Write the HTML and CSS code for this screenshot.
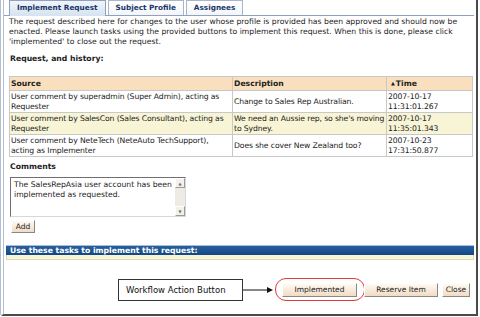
FILE: index.html
```html
<!DOCTYPE html>
<html lang="en">
<head>
    <meta charset="UTF-8">
    <title>Implement Request</title>
    <link rel="stylesheet" href="styles.css">
</head>
<body>
    <div class="frame">
        <div class="tabs">
            <span class="tab active">Implement Request</span>
            <span class="tab">Subject Profile</span>
            <span class="tab">Assignees</span>
        </div>

        <div class="panel">
            <p class="intro">The request described here for changes to the user whose profile is provided has been approved and should now be<br>enacted. Please launch tasks using the provided buttons to implement this request. When this is done, please click<br>'implemented' to close out the request.</p>

            <h4 class="label">Request, and history:</h4>

            <table class="history">
                <thead>
                    <tr>
                        <th class="col-source">Source</th>
                        <th class="col-desc">Description</th>
                        <th class="col-time"><span class="sort">&#9650;</span>Time</th>
                    </tr>
                </thead>
                <tbody>
                    <tr>
                        <td>User comment by superadmin (Super Admin), acting as<br>Requester</td>
                        <td>Change to Sales Rep Australian.</td>
                        <td>2007-10-17<br>11:31:01.267</td>
                    </tr>
                    <tr class="alt">
                        <td>User comment by SalesCon (Sales Consultant), acting as<br>Requester</td>
                        <td>We need an Aussie rep, so she's moving<br>to Sydney.</td>
                        <td>2007-10-17<br>11:35:01.343</td>
                    </tr>
                    <tr>
                        <td>User comment by NeteTech (NeteAuto TechSupport),<br>acting as Implementer</td>
                        <td>Does she cover New Zealand too?</td>
                        <td>2007-10-23<br>17:31:50.877</td>
                    </tr>
                </tbody>
            </table>

            <h4 class="label comments-label">Comments</h4>

            <div class="comment-box">
                <div class="comment-text">The SalesRepAsia user account has been<br>implemented as requested.</div>
                <div class="scrollbar">
                    <span class="scroll-btn">&#9650;</span>
                    <span class="scroll-track"></span>
                    <span class="scroll-btn">&#9660;</span>
                </div>
            </div>

            <button class="btn btn-add">Add</button>
        </div>

        <div class="tasks-bar">Use these tasks to implement this request:</div>
        <div class="tasks-sub"></div>

        <div class="actions">
            <div class="callout">Workflow Action Button</div>
            <svg class="callout-arrow" width="30" height="8" viewBox="0 0 30 8">
                <line x1="0" y1="4" x2="26" y2="4" stroke="#111" stroke-width="1"/>
                <polygon points="24,1 30,4 24,7" fill="#111"/>
            </svg>
            <span class="highlight">
                <button class="btn btn-implemented">Implemented</button>
            </span>
            <button class="btn btn-reserve">Reserve Item</button>
            <button class="btn btn-close">Close</button>
        </div>
    </div>
</body>
</html>
```

FILE: styles.css
```css
/* Workflow request panel */
*, *::before, *::after {
    box-sizing: border-box;
}

body {
    margin: 0;
    background: #fff;
    font-family: "DejaVu Sans", Verdana, sans-serif;
    font-size: 7.7px;
    color: #222;
}

.frame {
    width: 478px;
    height: 316px;
    border-left: 4px double #b4c0d2;
    border-right: 2px solid #4a4a4a;
    border-bottom: 2px solid #4a4a4a;
    border-bottom-left-radius: 3px;
    display: flex;
    flex-direction: column;
}

/* tabs */
.tabs {
    display: flex;
    align-items: flex-end;
    gap: 2px;
    height: 16px;
    padding-left: 5px;
    margin-right: 2px;
    border-bottom: 1px solid #8ea2c0;
}

.tab {
    height: 15px;
    line-height: 13px;
    padding: 0 7px;
    border: 1px solid #a9b6c8;
    border-bottom: none;
    background: linear-gradient(#fff, #f3f5f8);
    color: #1a356a;
    font-weight: bold;
    font-size: 7.3px;
}

.tab.active {
    height: 16px;
    margin-bottom: -1px;
    background: linear-gradient(#f1f5fa, #d6e2f0);
    border-color: #8ea2c0;
}

/* panel content */
.panel {
    padding: 0 4px 0 5px;
}

.intro {
    margin: 1px 0 0;
    line-height: 10px;
}

.label {
    margin: 7px 0 0 1px;
    font-size: 7.7px;
    line-height: 10px;
    font-weight: bold;
}

.history {
    margin-top: 12px;
    width: 463px;
    table-layout: fixed;
    border-collapse: collapse;
    border: 1px solid #c4c4c4;
    line-height: 10px;
}

.history th {
    height: 14px;
    padding: 0 1px;
    background: #f9dfbe;
    border: 1px solid #c8c8c8;
    text-align: left;
    font-weight: bold;
}

.history td {
    height: 22px;
    padding: 0 1px;
    border: 1px solid #c8c8c8;
    vertical-align: middle;
    white-space: nowrap;
    letter-spacing: -0.12px;
}

.history tr.alt td {
    background: #f8f4d6;
}

.col-source { width: 223px; }
.col-desc { width: 154px; }
.col-time { width: 86px; }

.sort {
    font-size: 5px;
    padding: 0 1px 0 3px;
    vertical-align: 1px;
}

.comments-label {
    margin-top: 5px;
}

.comment-box {
    display: flex;
    width: 176px;
    height: 40px;
    margin: 5px 0 0 1px;
    border: 1px solid;
    border-color: #6f6f6f #d8d8d8 #d8d8d8 #6f6f6f;
    background: #fff;
}

.comment-text {
    flex: 1;
    padding: 2px 3px;
    line-height: 10px;
}

.scrollbar {
    display: flex;
    flex-direction: column;
    width: 10px;
    background: #eeebe4;
}

.scroll-btn {
    height: 10px;
    font-size: 4px;
    line-height: 9px;
    text-align: center;
    color: #666;
    background: #f3f1ec;
    border: 1px solid;
    border-color: #fff #9a9a9a #9a9a9a #fff;
}

.scroll-track {
    flex: 1;
}

/* buttons */
.btn {
    height: 14px;
    padding: 0;
    font-family: inherit;
    font-size: 7.5px;
    color: #222;
    background: linear-gradient(#fffaf3, #f1dcc3);
    border: 1px solid;
    border-color: #fff #888 #888 #fff;
    cursor: pointer;
}

.btn-add {
    display: block;
    width: 24px;
    height: 13px;
    margin: 3px 0 0 2px;
}

.btn-implemented { width: 75px; }
.btn-reserve { width: 74px; margin-left: -1px; }
.btn-close { width: 28px; margin-left: 4px; }

/* tasks */
.tasks-bar {
    margin: 12px 2px 0;
    height: 10px;
    line-height: 9px;
    padding-left: 4px;
    background: linear-gradient(#28609f, #134784);
    border-top: 1px solid #a6bedb;
    color: #fff;
    font-weight: bold;
}

.tasks-sub {
    margin: 0 2px;
    height: 5px;
    background: #f8f4d6;
    border: 1px solid #dcd8bc;
    border-top: none;
}

/* action row with annotation */
.actions {
    display: flex;
    align-items: center;
    margin-top: 18px;
    padding-left: 114px;
}

.callout {
    width: 125px;
    height: 22px;
    line-height: 20px;
    padding-left: 7px;
    border: 1px solid #333;
    font-size: 8.5px;
    color: #111;
}

.callout-arrow {
    display: block;
    margin-right: 2px;
}

.highlight {
    display: flex;
    align-items: center;
    height: 23px;
    padding: 0 7px 0 6px;
    border: 1px solid #e23a3a;
    border-radius: 11px;
}
```
